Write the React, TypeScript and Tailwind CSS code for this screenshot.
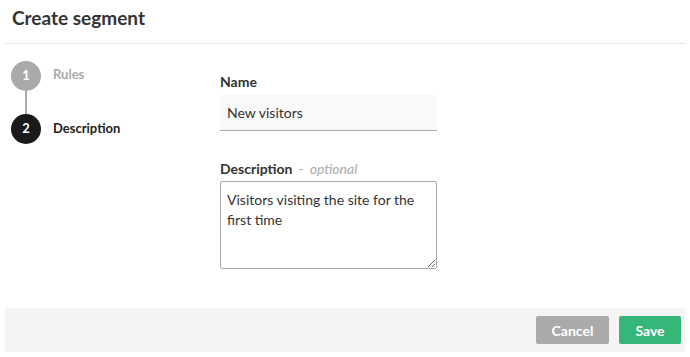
export default function App() {
  return (
    <div className="h-[357px] w-[690px] bg-white text-[#333]" style={{ fontFamily: 'Lato, "Open Sans", sans-serif' }}>
      {/* Header */}
      <div className="mx-[5px] border-b border-[#e5e5e5] px-[7px] pt-[5px] pb-[12px]">
        <h1 className="text-[19px] font-bold leading-[26px] text-[#333]">Create segment</h1>
      </div>

      <div className="flex px-[11px] pt-[17px]">
        {/* Steps */}
        <div className="w-[209px]">
          <div className="flex items-center">
            <div className="flex h-[30px] w-[30px] items-center justify-center rounded-full bg-[#aaa] text-[13px] font-bold text-white">1</div>
            <span className="ml-[12px] -mt-[2px] text-[13px] font-bold text-[#aaa]">Rules</span>
          </div>
          <div className="ml-[14px] h-[23px] w-[2px] bg-[#aaa]"></div>
          <div className="flex items-center">
            <div className="flex h-[30px] w-[30px] items-center justify-center rounded-full bg-[#1a1a1a] text-[13px] font-bold text-white">2</div>
            <span className="ml-[12px] text-[13px] font-bold text-[#222]">Description</span>
          </div>
        </div>

        {/* Form */}
        <div className="flex w-[217px] flex-col pt-[11px]">
          <label className="text-[14px] font-bold leading-[20px] text-[#333]">Name</label>
          <div className="mt-[3px] flex h-[36px] items-center border-b border-[#aaa] bg-[#f9f9f9] px-[7px] text-[14px] text-[#333]">
            New visitors
          </div>

          <label className="mt-[28px] text-[14px] leading-[20px]">
            <span className="font-bold text-[#333]">Description</span>
            <span className="ml-[6px] text-[#aaa]">-</span>
            <span className="ml-[6px] italic text-[#aaa]">optional</span>
          </label>
          <textarea
            className="mt-[2px] h-[88px] w-full rounded-[2px] border border-[#aaa] px-[6px] py-[8px] text-[14px] leading-[20px] text-[#333] outline-none"
            defaultValue="Visitors visiting the site for the first time"
          />
        </div>
      </div>

      {/* Footer */}
      <div className="mx-[5px] mt-[39px] flex h-[44px] items-center justify-end gap-[10px] bg-[#f4f4f4] pr-[4px]">
        <button className="h-[28px] w-[73px] rounded-[2px] bg-[#aaa] text-[14px] font-bold text-white">Cancel</button>
        <button className="h-[28px] w-[62px] rounded-[2px] bg-[#36b77a] text-[14px] font-bold text-white">Save</button>
      </div>
    </div>
  )
}
